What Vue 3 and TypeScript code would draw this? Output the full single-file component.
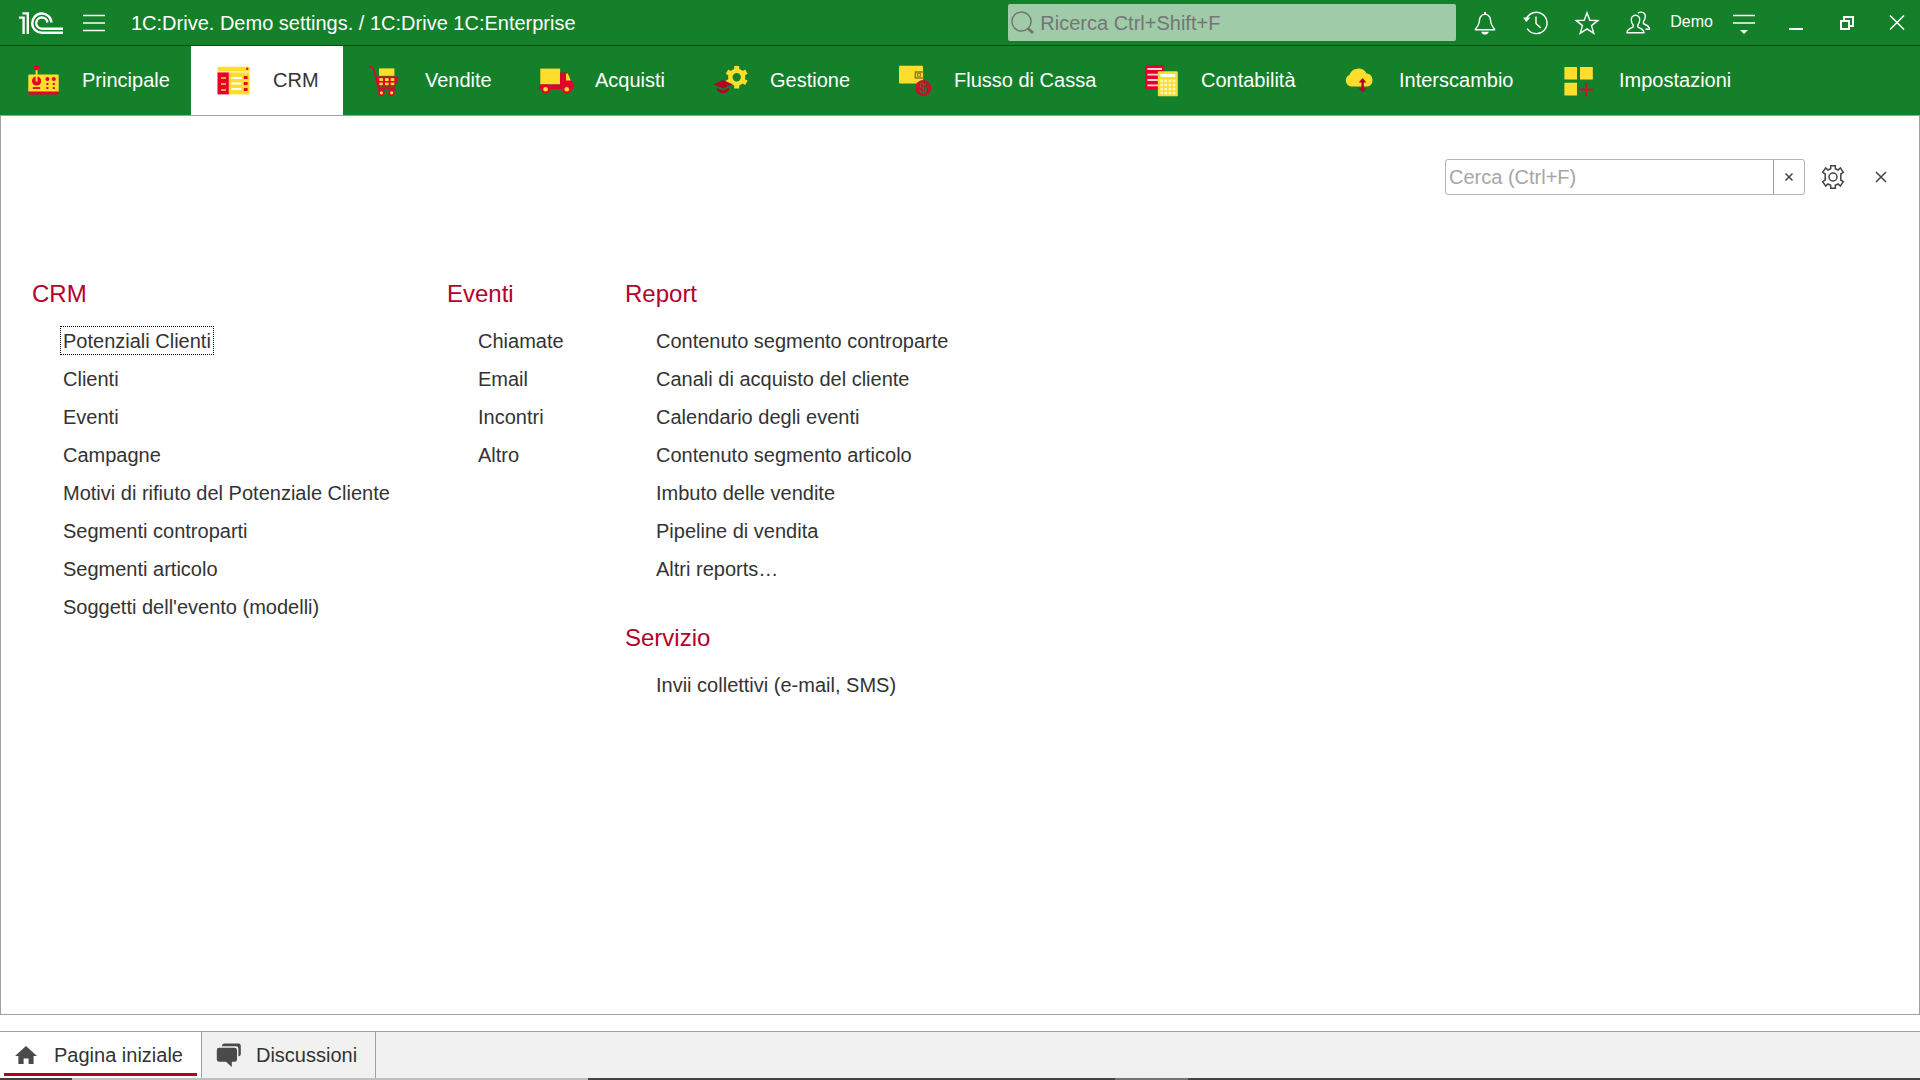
<script setup lang="ts">
import { ref } from 'vue'

interface Section {
  id: string
  label: string
}

interface Group {
  title: string
  items: string[]
}

const sections: Section[] = [
  { id: 'main', label: 'Principale' },
  { id: 'crm', label: 'CRM' },
  { id: 'sales', label: 'Vendite' },
  { id: 'purchases', label: 'Acquisti' },
  { id: 'company', label: 'Gestione' },
  { id: 'cash', label: 'Flusso di Cassa' },
  { id: 'accounting', label: 'Contabilità' },
  { id: 'exchange', label: 'Interscambio' },
  { id: 'settings', label: 'Impostazioni' },
]

const activeSection = ref('crm')
const focusedItem = ref('Potenziali Clienti')

const columns: Group[][] = [
  [
    {
      title: 'CRM',
      items: [
        'Potenziali Clienti',
        'Clienti',
        'Eventi',
        'Campagne',
        'Motivi di rifiuto del Potenziale Cliente',
        'Segmenti controparti',
        'Segmenti articolo',
        "Soggetti dell'evento (modelli)",
      ],
    },
  ],
  [{ title: 'Eventi', items: ['Chiamate', 'Email', 'Incontri', 'Altro'] }],
  [
    {
      title: 'Report',
      items: [
        'Contenuto segmento controparte',
        'Canali di acquisto del cliente',
        'Calendario degli eventi',
        'Contenuto segmento articolo',
        'Imbuto delle vendite',
        'Pipeline di vendita',
        'Altri reports…',
      ],
    },
    { title: 'Servizio', items: ['Invii collettivi (e-mail, SMS)'] },
  ],
]

const globalSearch = ref('')
const menuSearch = ref('')
</script>

<template>
  <div class="app">
    <header class="titlebar">
      <svg class="logo" width="44" height="22" viewBox="0 0 44 22" aria-label="1C">
        <g fill="none" stroke="#fff" stroke-width="2.4">
          <path d="M0 5.6H4.6V22" />
          <path d="M3.4 1.4H8.8V22" />
          <path d="M32.4 10.5A9.6 9.6 0 1 0 23 20.7H44" />
          <path d="M28.4 10.5A5.6 5.6 0 1 0 23 16.7H44" />
        </g>
      </svg>
      <button class="burger" type="button" aria-label="Menu">
        <svg width="22" height="18" viewBox="0 0 22 18">
          <path d="M0 1.5H22M0 9H22M0 16.5H22" stroke="#fff" stroke-width="1.4" />
        </svg>
      </button>
      <h1 class="title">1C:Drive. Demo settings. / 1C:Drive 1C:Enterprise</h1>

      <label class="search">
        <svg width="24" height="24" viewBox="0 0 24 24" fill="none" stroke="#757575">
          <circle cx="10.5" cy="10.5" r="9.6" stroke-width="1.5" />
          <path d="M16.5 17L22 22" stroke-width="3" />
        </svg>
        <input v-model="globalSearch" type="text" placeholder="Ricerca Ctrl+Shift+F" aria-label="Ricerca" />
      </label>

      <button class="tool" type="button" aria-label="Notifiche">
        <svg width="24" height="24" viewBox="0 0 24 24" fill="none" stroke="#fff" stroke-width="1.4">
          <path d="M2.3 18.7H21.7C21.3 16.8 18.6 15.7 17.9 11.5C17.4 7.5 17 3.6 12 3.1C7 3.6 6.6 7.5 6.1 11.5C5.4 15.7 2.7 16.8 2.3 18.7Z" stroke-linejoin="round" />
          <path d="M12 3.2V1" stroke-width="2" />
          <path d="M8 20.8H16C15 23 13.6 23.6 12 23.6S9 23 8 20.8Z" fill="#fff" stroke="none" />
        </svg>
      </button>
      <button class="tool" type="button" aria-label="Cronologia">
        <svg width="24" height="24" viewBox="0 0 24 24" fill="none" stroke="#fff" stroke-width="1.4">
          <path d="M2.4 8A10.7 10.7 0 1 1 3.2 17.5" />
          <path d="M12 5.5V12.5L16.8 17" />
          <path d="M-1 6.6H6.4L2.3 11Z" fill="#fff" stroke="none" />
        </svg>
      </button>
      <button class="tool" type="button" aria-label="Preferiti">
        <svg width="24" height="24" viewBox="0 0 24 24" fill="none" stroke="#fff" stroke-width="1.4">
          <path d="M12 1.8L14.8 9.3L22.8 9.6L16.5 14.6L18.8 22.4L12 17.9L5.2 22.4L7.5 14.6L1.2 9.6L9.2 9.3Z" />
        </svg>
      </button>
      <button class="tool" type="button" aria-label="Utenti">
        <svg width="24" height="24" viewBox="0 0 24 24" fill="none" stroke="#fff" stroke-width="1.4" stroke-linejoin="round">
          <path d="M9.5 4.3C12.6 4.3 14 6.6 13.7 9.4C13.5 11.6 12.7 13 11.8 14V16C13.8 17.3 17.6 17.8 18 21.7H.9C1.3 17.8 5.2 17.3 7.2 16V14C6.3 13 5.5 11.6 5.3 9.4C5 6.6 6.4 4.3 9.5 4.3Z" />
          <path d="M12 2.3C12.8 1.4 13.7 1.1 15 1.1C18.2 1.1 19.5 3.3 19.2 6C19 8.2 18.3 9.6 17.4 10.6V12.6C19.4 13.9 23.2 14.4 23.6 18.2H19.5" />
        </svg>
      </button>
      <button class="user" type="button">Demo</button>
      <button class="tool" type="button" aria-label="Servizio e impostazioni">
        <svg width="24" height="24" viewBox="0 0 24 24">
          <path d="M0 4.5H22M0 12H22" stroke="#fff" stroke-width="1.4" />
          <path d="M7 19H15L11 23Z" fill="#fff" />
        </svg>
      </button>
      <button class="tool" type="button" aria-label="Riduci">
        <svg width="24" height="24" viewBox="0 0 24 24"><path d="M5 18H19" stroke="#fff" stroke-width="2" /></svg>
      </button>
      <button class="tool" type="button" aria-label="Ripristina">
        <svg width="24" height="24" viewBox="0 0 24 24" fill="none" stroke="#fff" stroke-width="2">
          <path d="M9 9V6H18V15H15" />
          <path d="M6 10H14V18H6Z" />
        </svg>
      </button>
      <button class="tool" type="button" aria-label="Chiudi">
        <svg width="24" height="24" viewBox="0 0 24 24"><path d="M4 4.5L18 18.5M18 4.5L4 18.5" stroke="#fff" stroke-width="1.5" /></svg>
      </button>
    </header>

    <nav class="sections">
      <button
        v-for="s in sections"
        :key="s.id"
        type="button"
        class="section"
        :class="{ active: s.id === activeSection }"
        @click="activeSection = s.id"
      >
        <svg class="section-icon" width="32" height="32" viewBox="0 0 32 32">
          <g v-if="s.id === 'main'">
            <path d="M10.6 4V10" stroke="#ffdd2d" stroke-width="2" />
            <circle cx="10.6" cy="2.6" r="2.6" fill="#e4002b" />
            <rect x="2.3" y="9.5" width="30.4" height="18" rx="1" fill="#ffdd2d" />
            <path d="M2.3 26.5H32.7V27.5Q32.7 29.4 31 29.4H4Q2.3 29.4 2.3 27.5Z" fill="#e4002b" />
            <circle cx="10.6" cy="16" r="4.6" fill="#e4002b" />
            <path d="M10.6 10.5V16.5" stroke="#ffdd2d" stroke-width="2" />
            <path d="M6.8 23H14.2" stroke="#e4002b" stroke-width="1.8" />
            <g fill="#e4002b">
              <circle cx="21.4" cy="14" r="2" /><circle cx="27.8" cy="14" r="2" />
              <rect x="20.4" y="18" width="2" height="2" /><rect x="26.8" y="18" width="2" height="2" />
              <rect x="20.4" y="22" width="2" height="2" /><rect x="26.8" y="22" width="2" height="2" />
            </g>
          </g>
          <g v-else-if="s.id === 'crm'">
            <path d="M.5 6.5V3Q.5 1.8 2 1.8H31Q32.6 1.8 32.6 3V6.5Z" fill="#ffdd2d" />
            <circle cx="30.2" cy="3.8" r="1.2" fill="#e4002b" />
            <rect x=".5" y="7.4" width="11.4" height="22" fill="#e4002b" />
            <rect x="11.9" y="7.4" width="20.7" height="22" fill="#ffdd2d" />
            <path d="M4 13H9M4 19H9M4 25H9" stroke="#ffdd2d" stroke-width="1.6" />
            <path d="M14.5 13H24.5M14.5 18.5H24.5M14.5 24H24.5" stroke="#fff" stroke-width="2" />
            <path d="M26.8 12.5H30.6M26.8 18.5H30.6M26.8 24.5H30.6" stroke="#e4002b" stroke-width="3" />
          </g>
          <g v-else-if="s.id === 'sales'">
            <path d="M0 2C3.6 1.6 4.6 3.5 5.4 6.5L9.5 23.5H26.5" fill="none" stroke="#c8102e" stroke-width="1.8" />
            <rect x="10" y="3.4" width="15.4" height="7.4" fill="#ffdd2d" />
            <path d="M6.4 11.4H29.4L26.6 21.6H9Z" fill="#e4002b" />
            <g fill="#ffdd2d">
              <rect x="10.3" y="13.2" width="3.6" height="2.8" /><rect x="16" y="13.2" width="3.6" height="2.8" /><rect x="21.7" y="13.2" width="3.6" height="2.8" />
              <rect x="10.3" y="17.6" width="3.6" height="2.6" /><rect x="16" y="17.6" width="3.6" height="2.6" /><rect x="21.7" y="17.6" width="3.6" height="2.6" />
            </g>
            <circle cx="12.4" cy="27.8" r="3.3" fill="#e4002b" /><circle cx="22.6" cy="27.8" r="3.3" fill="#e4002b" />
            <circle cx="12.4" cy="27.8" r="1.6" fill="#ffdd2d" /><circle cx="22.6" cy="27.8" r="1.6" fill="#ffdd2d" />
          </g>
          <g v-else-if="s.id === 'purchases'">
            <rect x="1.3" y="3.6" width="19.8" height="15.8" fill="#ffdd2d" />
            <path d="M21.1 7.4H28.5L32.5 16.5L34.8 18V24H0V19.4H21.1Z" fill="#e4002b" />
            <path d="M27 8.5H28.8L31.8 15.5H27Z" fill="#ffdd2d" />
            <circle cx="6.6" cy="24.2" r="4.7" fill="#e4002b" /><circle cx="27.8" cy="24.2" r="4.7" fill="#e4002b" />
            <circle cx="6.6" cy="24.2" r="2.3" fill="#ffdd2d" /><circle cx="27.8" cy="24.2" r="2.3" fill="#ffdd2d" />
          </g>
          <g v-else-if="s.id === 'company'">
            <circle cx="22.7" cy="12.2" r="6.4" fill="none" stroke="#ffdd2d" stroke-width="4.4" />
            <path d="M22.7 1V5M22.7 19.4V23.4M13 6.6L16.5 8.6M28.9 15.8L32.4 17.8M13 17.8L16.5 15.8M28.9 8.6L32.4 6.6" stroke="#ffdd2d" stroke-width="5" />
            <path d="M-.6 19.2L9 15L18.6 19.2L9 23.4Z" fill="#b3002d" />
            <path d="M3 23L9 25.4L15 23V25.6Q12 28.3 9 28.3T3 25.6Z" fill="#b3002d" />
          </g>
          <g v-else-if="s.id === 'cash'">
            <rect x="1" y=".8" width="24" height="17.8" rx="1" fill="#ffdd2d" />
            <path d="M26 6.9H17.4V12.9H26" fill="none" stroke="#8c7a20" stroke-width="1.5" />
            <rect x="19.6" y="8.6" width="3" height="2.6" fill="none" stroke="#8c7a20" />
            <circle cx="25.3" cy="23" r="8" fill="#c8102e" />
            <text x="25.3" y="28" text-anchor="middle" font-size="14" fill="#14802a" font-family="Liberation Sans, sans-serif">$</text>
          </g>
          <g v-else-if="s.id === 'accounting'">
            <rect x="0" y="0" width="19.2" height="24.6" fill="#e4002b" />
            <path d="M2.4 4H17M2.4 9.6H13M2.4 15H13M2.4 20.4H13" stroke="#ffd5dc" stroke-width="1.8" />
            <rect x="12.8" y="6.2" width="20" height="25" rx="1" fill="#ffdd2d" />
            <rect x="15.4" y="9" width="14.8" height="3" fill="#fff" />
            <path d="M15.4 16H30.4M15.4 20H30.4M15.4 24H30.4M15.4 28H30.4" stroke="#fff6c4" stroke-width="2.4" stroke-dasharray="2.6 1.5" />
          </g>
          <g v-else-if="s.id === 'exchange'">
            <path d="M8 21.4A6 6 0 0 1 6.4 10A9.4 9.4 0 0 1 23.6 8.6A6.6 6.6 0 0 1 25 21.4Z" fill="#ffdd2d" />
            <path d="M19.6 15V26" stroke="#b3002d" stroke-width="2.4" />
            <path d="M15.8 17.6L19.6 13L23.4 17.6ZM15.8 23.4L19.6 27.4L23.4 23.4Z" fill="#b3002d" />
          </g>
          <g v-else>
            <path d="M1.4 1.9H14V14.6H1.4ZM17 1.9H29.8V14.6H17ZM1.4 17.8H14V30.6H1.4Z" fill="#ffdd2d" />
            <path d="M23.2 18V31.4M17 24.6H29.6" stroke="#c8102e" stroke-width="2" />
          </g>
        </svg>
        <span>{{ s.label }}</span>
      </button>
    </nav>

    <main class="panel">
      <div class="panel-tools">
        <div class="find">
          <input v-model="menuSearch" type="text" placeholder="Cerca (Ctrl+F)" aria-label="Cerca" />
          <button type="button" aria-label="Cancella" @click="menuSearch = ''">
            <svg width="8" height="8" viewBox="0 0 8 8"><path d="M.5 .5L7.5 7.5M7.5 .5L.5 7.5" stroke="#444" stroke-width="1.5" /></svg>
          </button>
        </div>
        <button class="panel-button" type="button" aria-label="Impostazioni">
          <svg width="24" height="24" viewBox="0 0 24 24" fill="none" stroke="#444" stroke-width="1.5">
            <circle cx="12" cy="12" r="4" />
            <path d="M9.7 .8H14.3V3.8L17.1 5L19.3 2.9L22.3 7.4L19.8 9V15L22.3 16.6L19.3 21.1L17.1 19L14.3 20.2V23.2H9.7V20.2L6.9 19L4.7 21.1L1.7 16.6L4.2 15V9L1.7 7.4L4.7 2.9L6.9 5L9.7 3.8Z" />
          </svg>
        </button>
        <button class="panel-button" type="button" aria-label="Chiudi">
          <svg width="10" height="10" viewBox="0 0 10 10"><path d="M0 0L10 10M10 0L0 10" stroke="#444" stroke-width="1.5" /></svg>
        </button>
      </div>

      <div class="columns">
        <div v-for="(groups, i) in columns" :key="i" class="column">
          <section v-for="g in groups" :key="g.title">
            <h2>{{ g.title }}</h2>
            <ul>
              <li v-for="item in g.items" :key="item">
                <a href="#" :class="{ focused: item === focusedItem }" @click.prevent="focusedItem = item">{{ item }}</a>
              </li>
            </ul>
          </section>
        </div>
      </div>
    </main>

    <footer class="tabs">
      <button class="tab current" type="button">
        <svg width="24" height="24" viewBox="0 0 24 24" fill="#4a4a4a">
          <path d="M12 3L23 13H19.6V21H14.6V15.4H9.6V21H4.4V13H1Z" />
        </svg>
        <span>Pagina iniziale</span>
      </button>
      <button class="tab" type="button">
        <svg width="24" height="24" viewBox="0 0 24 24" fill="#4a4a4a">
          <path d="M6 3.2Q6 .6 8.4 .6H22.4Q24.8 .6 24.8 3V11Q24.8 13.4 22.4 13.4V5.4Q22.4 3.2 20 3.2Z" />
          <path d="M3.2 4.8H18.6Q21 4.8 21 7.2V16.4Q21 18.8 18.6 18.8H15.8V24L10 18.8H3.2Q.8 18.8 .8 16.4V7.2Q.8 4.8 3.2 4.8Z" />
        </svg>
        <span>Discussioni</span>
      </button>
    </footer>
    <div class="taskbar-edge"></div>
  </div>
</template>

<style>
body {
  margin: 0;
  background: #fff;
}
</style>

<style scoped>
.app {
  display: flex;
  flex-direction: column;
  min-height: 100vh;
  font-family: "Liberation Sans", Arial, sans-serif;
  font-size: 20px;
  color: #333;
}
button {
  display: flex;
  align-items: center;
  justify-content: center;
  margin: 0;
  padding: 0;
  border: 0;
  background: none;
  color: inherit;
  font: inherit;
  white-space: nowrap;
}
svg {
  display: block;
  flex: none;
  overflow: visible;
}
input {
  flex: 1;
  min-width: 0;
  padding: 0;
  border: 0;
  outline: 0;
  background: none;
  font: inherit;
  color: #333;
}

.titlebar {
  display: flex;
  align-items: center;
  gap: 7px;
  height: 45px;
  padding-left: 19px;
  border-bottom: 1px solid #06520c;
  background: #14802a;
  color: #fff;
}
.burger {
  width: 48px;
}
.title {
  flex: 1;
  margin: 0 0 0 6px;
  font-size: 20px;
  font-weight: 400;
  line-height: 24px;
  white-space: nowrap;
}
.search {
  display: flex;
  align-items: center;
  gap: 5px;
  box-sizing: border-box;
  width: 448px;
  height: 37px;
  padding: 0 3px;
  border-radius: 2px;
  background: #9fcba8;
}
.search input {
  padding-top: 2px;
}
.search input::placeholder {
  color: #757575;
  opacity: 1;
}
.tool {
  width: 44px;
  height: 44px;
}
.user {
  padding: 0 3px 2px;
  font-size: 16px;
}

.sections {
  display: grid;
  grid-template-columns: 191px 152px 170px 175px 184px 247px 198px 220px 215px;
  height: 69px;
  background: #14802a;
  color: #fff;
}
.section {
  justify-content: flex-start;
  gap: 24px;
  padding-left: 26px;
}
.section.active {
  background: #fff;
  color: #333;
}

.panel {
  flex: 1;
  border: 1px solid #a0a0a0;
  padding: 43px 18px 43px 31px;
}
.panel-tools {
  display: flex;
  justify-content: flex-end;
  gap: 8px;
}
.find {
  display: flex;
  box-sizing: border-box;
  width: 360px;
  height: 36px;
  border: 1px solid #b4b4b4;
  border-radius: 3px;
}
.find input {
  padding-left: 3px;
}
.find input::placeholder {
  color: #a6a6a6;
  opacity: 1;
}
.find button {
  width: 31px;
  border-left: 1px solid #a0a0a0;
}
.panel-button {
  width: 40px;
  height: 36px;
}

.columns {
  display: grid;
  grid-template-columns: 415px 178px 1fr;
  margin-top: 85px;
}
.column {
  display: flex;
  flex-direction: column;
  gap: 41px;
}
h2 {
  margin: 0 0 18px;
  font-size: 24px;
  font-weight: 400;
  line-height: 28px;
  color: #b3002d;
}
ul {
  display: flex;
  flex-direction: column;
  gap: 9px;
  margin: 0 0 0 28px;
  padding: 0;
  list-style: none;
}
li {
  display: flex;
}
a {
  padding: 2px 2px 0;
  border: 1px solid transparent;
  line-height: 25px;
  color: inherit;
  text-decoration: none;
  white-space: nowrap;
}
a.focused {
  border: 1px dotted #000;
}

.tabs {
  display: flex;
  height: 46px;
  margin-top: 16px;
  border-top: 1px solid #a0a0a0;
  background: #f1f1f1;
}
.tab {
  position: relative;
  gap: 16px;
  padding: 0 18px 0 14px;
  border-right: 1px solid #a0a0a0;
}
.tab span {
  line-height: 24px;
}
.tab.current {
  background: #fff;
}
.tab.current::after {
  content: "";
  position: absolute;
  right: 4px;
  bottom: 2px;
  left: 4px;
  height: 3px;
  background: #b00024;
}
.taskbar-edge {
  height: 2px;
  background: linear-gradient(
    90deg,
    #463c3e 72px,
    #c0bfbf 72px 588px,
    #444 588px 1115px,
    #747474 1115px 1188px,
    #444 1188px
  );
}
</style>
